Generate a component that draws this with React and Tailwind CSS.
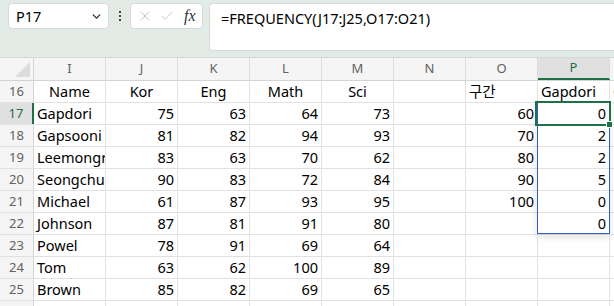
import React from "react";
import { ChevronDown, X, Check } from "lucide-react";

const cols = ["I", "J", "K", "L", "M", "N", "O", "P", "Q"];

const students = [
  ["Gapdori", 75, 63, 64, 73],
  ["Gapsooni", 81, 82, 94, 93],
  ["Leemongryong", 83, 63, 70, 62],
  ["Seongchunhyang", 90, 83, 72, 84],
  ["Michael", 61, 87, 93, 95],
  ["Johnson", 87, 81, 91, 80],
  ["Powel", 78, 91, 69, 64],
  ["Tom", 63, 62, 100, 89],
  ["Brown", 85, 82, 69, 65],
];
const bins = [60, 70, 80, 90, 100];
const freq = [0, 2, 2, 5, 0, 0];

// one row of cells: [text, align]
function buildRows() {
  const rows = [];
  rows.push({
    n: 16,
    cells: [["Name", "c"], ["Kor", "c"], ["Eng", "c"], ["Math", "c"], ["Sci", "c"], ["", "l"], ["구간", "l"], ["Gapdori", "l"], ["Gapsooni", "l"]],
  });
  for (let i = 0; i < 10; i++) {
    const s = students[i];
    rows.push({
      n: 17 + i,
      cells: [
        [s ? s[0] : "", "l"],
        [s ? s[1] : "", "r"],
        [s ? s[2] : "", "r"],
        [s ? s[3] : "", "r"],
        [s ? s[4] : "", "r"],
        ["", "l"],
        [bins[i] ?? "", "r"],
        [freq[i] ?? "", "r"],
        ["", "l"],
      ],
    });
  }
  return rows;
}

const alignCls = { l: "justify-start", c: "justify-center", r: "justify-end" };

export default function App() {
  const rows = buildRows();
  return (
    <div className="relative w-[614px] h-[306px] overflow-hidden bg-white font-['Noto_Sans','Noto_Sans_CJK_KR',sans-serif] text-black">
      {/* formula toolbar */}
      <div className="h-[58px] bg-[#e2ebe6] border-b border-[#d3d8d5] flex items-start pt-[3px] pl-[8px]">
        <div className="w-[101px] h-[26px] bg-white rounded-[4px] border border-[#d5dcd8] flex items-center pl-[7px] pr-[5px]">
          <span className="text-[14.5px] leading-none flex-1">P17</span>
          <ChevronDown size={13} strokeWidth={2.6} className="text-[#333]" />
        </div>
        <div className="w-[21px] h-[26px] flex flex-col items-center justify-center gap-[2px]">
          <div className="w-[2px] h-[2px] bg-[#444]" />
          <div className="w-[2px] h-[2px] bg-[#444]" />
          <div className="w-[2px] h-[2px] bg-[#444]" />
        </div>
        <div className="w-[73px] h-[26px] bg-white rounded-[4px] border border-[#d5dcd8] flex items-center pl-[6px] gap-[6px]">
          <X size={16} strokeWidth={1} className="text-[#a8a8a8]" />
          <Check size={16} strokeWidth={1} className="text-[#a8a8a8]" />
          <span className="font-['Liberation_Serif',serif] italic text-[16px] leading-none text-[#333] ml-[3px]">fx</span>
        </div>
        <div className="ml-[6px] flex-1 h-[48px] bg-white rounded-l-[4px] border border-r-0 border-[#d5dcd8] pl-[11px] pt-[2px]">
          <span className="text-[14.5px] leading-[22px]">=FREQUENCY(J17:J25,O17:O21)</span>
        </div>
      </div>

      {/* column headers */}
      <div className="flex h-[23px] bg-[#f5f5f5] border-b border-[#d4d4d4]">
        <div className="w-[34px] shrink-0 border-r border-[#d4d4d4] flex items-end justify-end pr-[3px] pb-[3px]">
          <div className="w-0 h-0 border-l-[15px] border-l-transparent border-b-[15px] border-b-[#dcdcdc]" />
        </div>
        {cols.map(c => (
          <div
            key={c}
            className={`w-[72px] shrink-0 border-r border-[#dcdcdc] flex items-center justify-center text-[13px] ${c === "P" ? "bg-[#e0e0e0] text-[#1e6e42] border-b-2 border-b-[#1e7145]" : "text-[#616161]"}`}
          >
            {c}
          </div>
        ))}
      </div>

      {/* rows */}
      {rows.map(r => (
        <div key={r.n} className="flex h-[22px] border-b border-[#e1e1e1]">
          <div
            className={`w-[34px] shrink-0 flex items-center justify-center text-[13px] ${r.n === 17 ? "bg-[#e0e0e0] text-[#1e6e42] border-r-2 border-r-[#1e7145]" : "bg-[#f5f5f5] text-[#616161] border-r border-[#d4d4d4]"}`}
          >
            {r.n}
          </div>
          {r.cells.map((c, i) => (
            <div
              key={i}
              className={`w-[72px] shrink-0 border-r border-[#e1e1e1] flex items-center overflow-hidden whitespace-nowrap px-[3px] text-[14.5px] leading-none ${alignCls[c[1]]}`}
            >
              {c[0]}
            </div>
          ))}
        </div>
      ))}

      {/* spill range border */}
      <div className="absolute left-[537px] top-[102px] w-[73px] h-[132px] border border-[#2e62c6] shadow-[0_3px_8px_rgba(0,0,0,0.12)]" />
      {/* active cell */}
      <div className="absolute left-[535px] top-[101px] w-[76px] h-[25px] border-2 border-[#1e7145]" />
      <div className="absolute left-[606px] top-[121px] w-[7px] h-[7px] bg-[#1e7145] border border-white" />
    </div>
  );
}
